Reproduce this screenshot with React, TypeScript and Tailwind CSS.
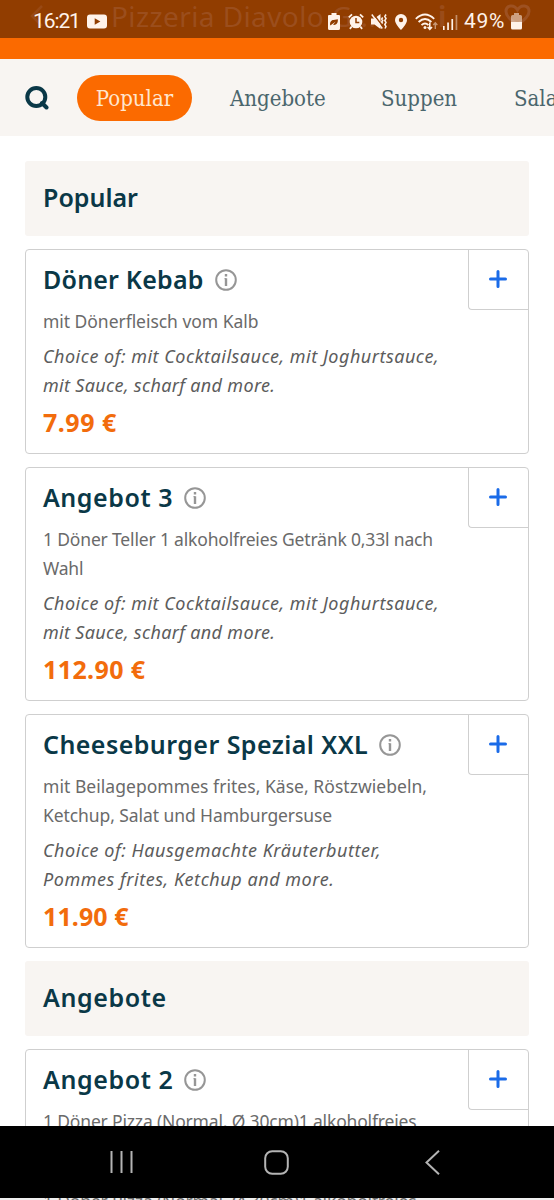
import React from 'react';

type Line = { text: string; className: string };

type Dish = {
  name: string;
  nameClass: string;
  description: Line[];
  choices: Line[];
  price: string;
  priceClass: string;
};

type Section = {
  title: string;
  titleClass: string;
  dishes: Dish[];
};

const sauceChoices: Line[] = [
  { text: 'Choice of: mit Cocktailsauce, mit Joghurtsauce,', className: 'tracking-[0.5px]' },
  { text: 'mit Sauce, scharf and more.', className: 'tracking-[0.33px]' },
];

const sections: Section[] = [
  {
    title: 'Popular',
    titleClass: '',
    dishes: [
      {
        name: 'Döner Kebab',
        nameClass: 'tracking-[0.2px]',
        description: [{ text: 'mit Dönerfleisch vom Kalb', className: 'tracking-[-0.04px]' }],
        choices: sauceChoices,
        price: '7.99 €',
        priceClass: 'tracking-[0.5px]',
      },
      {
        name: 'Angebot 3',
        nameClass: 'tracking-[0.55px]',
        description: [
          { text: '1 Döner Teller 1 alkoholfreies Getränk 0,33l nach', className: 'tracking-[-0.17px]' },
          { text: 'Wahl', className: 'tracking-[-0.2px]' },
        ],
        choices: sauceChoices,
        price: '112.90 €',
        priceClass: 'tracking-[0.4px]',
      },
      {
        name: 'Cheeseburger Spezial XXL',
        nameClass: 'tracking-[0.44px]',
        description: [
          { text: 'mit Beilagepommes frites, Käse, Röstzwiebeln,', className: 'tracking-[0.04px]' },
          { text: 'Ketchup, Salat und Hamburgersuse', className: 'tracking-[-0.08px]' },
        ],
        choices: [
          { text: 'Choice of: Hausgemachte Kräuterbutter,', className: 'tracking-[0.53px]' },
          { text: 'Pommes frites, Ketchup and more.', className: 'tracking-[0.54px]' },
        ],
        price: '11.90 €',
        priceClass: 'tracking-[0.1px]',
      },
    ],
  },
  {
    title: 'Angebote',
    titleClass: 'tracking-[0.6px]',
    dishes: [
      {
        name: 'Angebot 2',
        nameClass: 'tracking-[0.6px]',
        description: [{ text: '1 Döner Pizza (Normal, Ø 30cm)1 alkoholfreies', className: 'tracking-[-0.17px]' }],
        choices: sauceChoices,
        price: '19.90 €',
        priceClass: 'tracking-[0.1px]',
      },
    ],
  },
];

const StatusBar: React.FC = () => (
  <header className="relative h-[59px] shrink-0 bg-[#fb6a00]">
    {/* App title fading out under the status bar */}
    <div className="absolute inset-x-0 top-0 h-[38px] overflow-hidden bg-[#913d00] text-[#a0562a]">
      <svg className="absolute left-[30px] top-[5px] opacity-50" width="14" height="22" viewBox="0 0 14 22" fill="none" stroke="currentColor" strokeWidth="2.5">
        <path d="M12 1 2 11l10 10" />
      </svg>
      <span className="absolute left-[111px] top-0 whitespace-nowrap font-['Noto_Sans',sans-serif] text-[28px] leading-[32px] tracking-[0.4px] opacity-70">
        Pizzeria Diavolo G...
      </span>
      <span className="absolute left-[438px] top-0 font-['Noto_Sans',sans-serif] text-[28px] font-bold leading-[32px] opacity-60">i</span>
      <svg className="absolute left-[504px] top-[4px] opacity-80" width="27" height="23" viewBox="0 0 27 23" fill="none" stroke="currentColor" strokeWidth="3">
        <path d="M13.500 21C7 16 2 12.500 2 7.500 2 1 10 0 13.500 6 17 0 25 1 25 7.500c0 5-5 8.500-11.500 13.500z" />
      </svg>
    </div>

    <div className="relative flex h-[43px] items-center pl-[33px] font-[Roboto,sans-serif] text-[21px] text-[#fff3ea]">
      <span className="w-[54px] tracking-[-1.1px]">16:21</span>
      <svg width="20" height="15" viewBox="0 0 20 15" fill="currentColor">
        <path fillRule="evenodd" d="M3 0.500h14q3 0 3 3v8q0 3-3 3H3q-3 0-3-3v-8q0-3 3-3zM7.700 4.200v6.600l5.700-3.300z" />
      </svg>
      <svg className="ml-[221px]" width="12" height="17" viewBox="0 0 12 17">
        <path fill="currentColor" d="M3.500 0h5v2H11q1 0 1 1v12.500q0 1.500-1.500 1.500h-9Q0 17 0 15.500V3q0-1 1-1h2.500z" />
        <path fill="#913d00" d="M2.300 12.500c-.8-3 .7-5.500 3.200-5.500L9.800 6.300C10.300 10 8.300 12.500 5 11.800l2.700-3.300-4 3z" />
      </svg>
      <svg className="ml-[8px]" width="16" height="17" viewBox="0 0 16 17" fill="none" stroke="currentColor">
        <circle cx="8" cy="9" r="6.300" fill="currentColor" stroke="none" />
        <path strokeWidth="1.800" d="M.8 4.300 4 1.300M15.200 4.300 12 1.300M3.700 13.500l-1.800 2.400M12.300 13.500l1.800 2.400" />
        <path stroke="#913d00" strokeWidth="1.500" d="M8 5v4.500h3.300" />
      </svg>
      <svg className="ml-[7px]" width="17" height="17" viewBox="0 0 17 17" fill="currentColor">
        <path d="M0 5.500h3.500L9.500 1v15L3.500 11.500H0z" />
        <path d="M2 .500l10 13" stroke="#913d00" strokeWidth="1.300" />
        <path d="M.8 1.500l10.500 14" stroke="currentColor" strokeWidth="1.500" />
        <path d="M11.700 4.500 10.700 6l1 1.500-1 1.500 1 1.500M15 1.500l-1.200 2 1.200 2-1.200 2 1.200 2-1.200 2 1.200 2-1 2" fill="none" stroke="currentColor" strokeWidth="1.500" />
      </svg>
      <svg className="ml-[7px]" width="12" height="16" viewBox="0 0 12 16" fill="currentColor">
        <path fillRule="evenodd" d="M6 0a6 6 0 0 1 6 6c0 4.200-6 10-6 10S0 10.200 0 6a6 6 0 0 1 6-6zm0 3.800a2.200 2.200 0 1 0 0 4.400 2.200 2.200 0 0 0 0-4.400z" />
      </svg>
      <svg className="ml-[8px]" width="23" height="18" viewBox="0 0 23 18" fill="none" stroke="currentColor" strokeWidth="1.800">
        <path d="M.8 5.800Q10 -2.700 19.200 5.800M3.600 9q6.400-6 12.800 0M6.500 12.200q3.500-3.400 7 0" />
        <circle cx="10" cy="14.500" r="1.500" fill="currentColor" stroke="none" />
        <path strokeWidth="1.600" d="M14.800 9.500v6.500M12.600 14l2.200 2.400L17 14" />
        <path strokeWidth="1.400" opacity="0.500" d="M20.300 16v-6M18.300 12l2-2.200 2 2.200" />
      </svg>
      <svg className="ml-[5px]" width="15" height="16" viewBox="0 0 15 16" fill="currentColor">
        <path d="M0 12h1.600v4H0zM4.200 8.500h1.700V16H4.200zM8.400 5h1.700v11H8.400z" />
        <path opacity="0.450" d="M12.600 1h1.700v15h-1.700z" />
      </svg>
      <span className="ml-[6px] w-[47px] tracking-[0.7px]">49%</span>
      <svg width="11" height="17" viewBox="0 0 11 17" fill="currentColor">
        <path opacity="0.550" d="M3 0h5v2h1.500Q11 2 11 3.500V9H0V3.500Q0 2 1.500 2H3z" />
        <path d="M0 9h11v6q0 1.500-1.500 1.500h-8Q0 16.500 0 15z" />
      </svg>
    </div>
  </header>
);

const CategoryTabs: React.FC = () => (
  <nav className="flex h-[77px] shrink-0 items-center overflow-hidden bg-[#f8f5f2] pl-[25px] font-['DejaVu_Serif_Condensed','DejaVu_Serif',serif] text-[22px] text-[#4b666d]">
    <svg className="shrink-0" width="24" height="24" viewBox="0 0 24 24" fill="none" stroke="#0a3847" strokeWidth="4">
      <circle cx="11.300" cy="11" r="9" />
      <path strokeLinecap="round" d="M17 17l4.500 4.500" />
    </svg>
    <button className="ml-[28px] flex h-[46px] w-[115px] shrink-0 items-center justify-center rounded-full bg-[#fb6a00] pt-[2px] text-[#ffe6cf]">
      Popular
    </button>
    <button className="ml-[38px] w-[97px] shrink-0 whitespace-nowrap pt-[2px] text-left">Angebote</button>
    <button className="ml-[54px] w-[78px] shrink-0 whitespace-nowrap pt-[2px] text-left">Suppen</button>
    <button className="ml-[55px] shrink-0 whitespace-nowrap pt-[2px] text-left">Salate</button>
  </nav>
);

const DishCard: React.FC<{ dish: Dish }> = ({ dish }) => (
  <article className="relative mt-[13px] rounded-[4px] border border-[#cfcfcf] pb-[9px] pl-[17px] pt-[12px] font-['Noto_Sans',sans-serif]">
    <div className="flex h-9 items-center">
      <h3 className="whitespace-nowrap text-[25px] font-semibold text-[#0a3847]">
        <span className={dish.nameClass}>{dish.name}</span>
      </h3>
      <svg className="ml-[11px] shrink-0" width="22" height="22" viewBox="0 0 22 22" fill="none" stroke="#969696">
        <circle cx="11" cy="11" r="9.800" strokeWidth="2" />
        <path strokeWidth="2.400" d="M11 9.200v7.800M11 5v2.400" />
        <path strokeWidth="1" d="M9.500 9.700H11" />
      </svg>
    </div>
    <div className="mt-[9px] text-[17.500px] leading-[29px] text-[#6a6a6a]">
      {dish.description.map((line) => (
        <p key={line.text} className="whitespace-nowrap">
          <span className={line.className}>{line.text}</span>
        </p>
      ))}
    </div>
    <div className="mt-[6px] text-[18px] italic leading-[29px] text-[#5c5c5c]">
      {dish.choices.map((line) => (
        <p key={line.text} className="whitespace-nowrap">
          <span className={line.className}>{line.text}</span>
        </p>
      ))}
    </div>
    <p className="text-[25px] font-bold leading-[44px] text-[#f26c0c]">
      <span className={dish.priceClass}>{dish.price}</span>
    </p>
    <button className="absolute right-0 top-0 flex h-[60px] w-[60px] items-center justify-center rounded-bl-[4px] border-b border-l border-[#cfcfcf] pb-px pr-px">
      <svg width="18" height="18" viewBox="0 0 18 18" stroke="#1a6be8" strokeWidth="3" strokeLinecap="round">
        <path d="M9 1.500v15M1.500 9h15" />
      </svg>
    </button>
  </article>
);

const SystemNav: React.FC = () => (
  <footer className="absolute inset-x-0 bottom-0">
    <div className="flex h-[72px] items-center bg-black text-[#b4b4b4]">
      <svg className="ml-[110px]" width="24" height="24" viewBox="0 0 24 24" stroke="currentColor" strokeWidth="2">
        <path d="M1.500 1v22M11.500 1v22M21.500 1v22" />
      </svg>
      <svg className="ml-[130px]" width="25" height="25" viewBox="0 0 25 25" fill="none" stroke="currentColor" strokeWidth="2">
        <rect x="1.200" y="1.200" width="22.600" height="22.600" rx="7" />
      </svg>
      <svg className="ml-[136px]" width="15" height="25" viewBox="0 0 15 25" fill="none" stroke="currentColor" strokeWidth="2">
        <path d="M14 .800 1.500 12.500 14 24.200" />
      </svg>
    </div>
    {/* Edge of the page left visible under the navigation bar */}
    <div className="h-[2px] overflow-hidden bg-[#efefef] pl-[43px] font-['Noto_Sans',sans-serif] text-[17.500px] text-[#6a6a6a]">
      <p className="-mt-[11px] leading-[29px] tracking-[-0.17px]">1 Döner Pizza (Normal, Ø 30cm)1 alkoholfreies</p>
    </div>
  </footer>
);

const App: React.FC = () => {
  return (
    <div className="relative flex h-[1200px] w-[554px] flex-col overflow-hidden bg-white">
      <StatusBar />
      <CategoryTabs />
      <main className="min-h-0 flex-1 overflow-hidden px-[25px] pt-[12px]">
        {sections.map((section) => (
          <section key={section.title}>
            <h2 className="mt-[13px] flex h-[75px] items-center rounded-[3px] bg-[#f8f5f2] pb-[2px] pl-[18px] font-['Noto_Sans',sans-serif] text-[25px] font-semibold text-[#0a3847]">
              <span className={section.titleClass}>{section.title}</span>
            </h2>
            {section.dishes.map((dish) => (
              <DishCard key={dish.name} dish={dish} />
            ))}
          </section>
        ))}
      </main>
      <SystemNav />
    </div>
  );
};

export default App;
